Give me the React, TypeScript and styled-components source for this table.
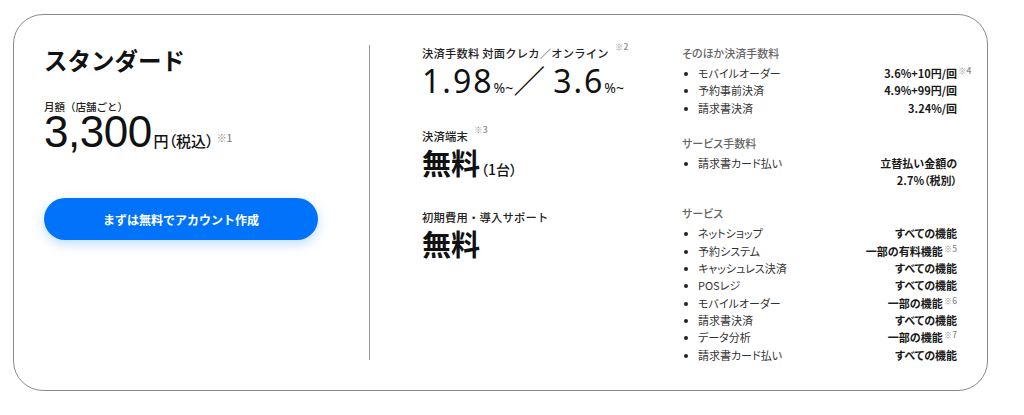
import React from "react";
import styled, { createGlobalStyle } from "styled-components";

const GlobalStyle = createGlobalStyle`
  html, body { margin: 0; padding: 0; background: #fff; }
  body {
    font-family: "Noto Sans CJK JP", "Noto Sans", sans-serif;
    color: #1a1a1a;
    -webkit-font-smoothing: antialiased;
  }
`;

const Page = styled.div`
  padding: 14px 0 0 13px;
`;

const Card = styled.section`
  box-sizing: border-box;
  width: 975px;
  height: 377px;
  border: 1px solid #8a8a8a;
  border-radius: 30px;
  padding: 30px;
  display: flex;
  align-items: stretch;
`;

const LeftCol = styled.div`
  width: 325px;
  flex: none;
  display: flex;
  flex-direction: column;
  align-items: flex-start;
`;

const Title = styled.h2`
  margin: 4px 0 0;
  font-size: 23.5px;
  line-height: 23px;
  font-weight: 700;
  color: #111;
`;

const SmallLabel = styled.div`
  margin-top: 28px;
  font-size: 10.5px;
  line-height: 14px;
  font-weight: 500;
  color: #222;
`;

const PriceRow = styled.div`
  display: flex;
  align-items: baseline;
  height: 36px;
  line-height: 36px;
  color: #111;
  font-feature-settings: "palt";
`;

const PriceNum = styled.span`
  font-family: "Liberation Sans", Arial, sans-serif;
  font-size: 44px;
  letter-spacing: -0.5px;
`;

const PriceUnit = styled.span`
  font-size: 15px;
  font-weight: 500;
  margin-left: 2px;
`;

const Note = styled.span<{ $top?: number; $size?: number; $ml?: number }>`
  font-size: ${(p) => p.$size ?? 8.5}px;
  color: #888;
  font-weight: 500;
  align-self: flex-start;
  line-height: 1;
  position: relative;
  top: ${(p) => p.$top ?? 0}px;
  margin-left: ${(p) => p.$ml ?? 2}px;
`;

const CtaButton = styled.button`
  margin-top: 48px;
  width: 274px;
  height: 42px;
  border: none;
  border-radius: 21px;
  background: #0073fa;
  color: #fff;
  font-family: "Noto Sans CJK JP", sans-serif;
  font-size: 12px;
  font-weight: 700;
  box-shadow: 0 4px 12px rgba(0, 115, 250, 0.25);
  cursor: pointer;
`;

const Divider = styled.div`
  width: 1px;
  flex: none;
  background: #9a9a9a;
`;

const MidCol = styled.div`
  width: 260px;
  flex: none;
  margin-left: 52px;
  display: flex;
  flex-direction: column;
  align-items: flex-start;
`;

const MidLabel = styled.div<{ $mt: number }>`
  margin-top: ${(p) => p.$mt}px;
  display: flex;
  align-items: center;
  height: 16px;
  font-size: 11.3px;
  line-height: 16px;
  font-weight: 500;
  color: #222;
  white-space: nowrap;
  letter-spacing: 0.2px;
`;

const RateRow = styled.div`
  display: flex;
  align-items: baseline;
  height: 40px;
  line-height: 40px;
  margin-top: -2px;
  color: #111;
`;

const RateNum = styled.span`
  font-family: "Noto Sans", sans-serif;
  font-size: 32px;
  font-weight: 400;
  letter-spacing: 2px;
`;

const RateUnit = styled.span`
  font-family: "Noto Sans", sans-serif;
  font-size: 14px;
  letter-spacing: 0;
`;

const RateSlash = styled.span`
  font-size: 32px;
  font-weight: 400;
  margin: 0 8px 0 0;
`;

const FreeRow = styled.div<{ $mt: number }>`
  margin-top: ${(p) => p.$mt}px;
  display: flex;
  align-items: baseline;
  height: 36px;
  line-height: 36px;
  color: #111;
  font-feature-settings: "palt";
`;

const FreeText = styled.span`
  font-size: 29px;
  font-weight: 700;
`;

const FreeSub = styled.span`
  font-size: 14px;
  font-weight: 500;
  margin-left: 1px;
`;

const RightCol = styled.div`
  flex: 1;
  display: flex;
  flex-direction: column;
  font-feature-settings: "palt";
`;

const Group = styled.div<{ $mt?: number }>`
  margin-top: ${(p) => p.$mt ?? 0}px;
`;

const GroupHead = styled.div`
  font-size: 11px;
  line-height: 17px;
  font-weight: 500;
  color: #666;
  margin-bottom: 3px;
`;

const Row = styled.div`
  display: flex;
  justify-content: space-between;
  align-items: flex-start;
  font-size: 11px;
  line-height: 17.3px;
`;

const RowLabel = styled.span`
  position: relative;
  padding-left: 16px;
  color: #333;
  &::before {
    content: "";
    position: absolute;
    left: 2px;
    top: 7px;
    width: 4px;
    height: 4px;
    border-radius: 50%;
    background: #222;
  }
`;

const RowValue = styled.span`
  position: relative;
  text-align: right;
  font-weight: 700;
  color: #1a1a1a;
`;

const HangNote = styled.span`
  position: absolute;
  left: 100%;
  top: -3px;
  font-size: 8.5px;
  color: #888;
  font-weight: 500;
  margin-left: 1px;
`;

const InlineNote = styled.span`
  font-size: 8.5px;
  color: #888;
  font-weight: 500;
  vertical-align: top;
  position: relative;
  top: -3px;
  margin-left: 1px;
`;

type Item = { label: string; value: React.ReactNode };

const otherFees: Item[] = [
  { label: "モバイルオーダー", value: <>3.6%+10円/回<HangNote>※4</HangNote></> },
  { label: "予約事前決済", value: "4.9%+99円/回" },
  { label: "請求書決済", value: "3.24%/回" },
];

const serviceFees: Item[] = [
  { label: "請求書カード払い", value: <>立替払い金額の<br />2.7%（税別）</> },
];

const services: Item[] = [
  { label: "ネットショップ", value: "すべての機能" },
  { label: "予約システム", value: <>一部の有料機能<InlineNote>※5</InlineNote></> },
  { label: "キャッシュレス決済", value: "すべての機能" },
  { label: "POSレジ", value: "すべての機能" },
  { label: "モバイルオーダー", value: <>一部の機能<InlineNote>※6</InlineNote></> },
  { label: "請求書決済", value: "すべての機能" },
  { label: "データ分析", value: <>一部の機能<InlineNote>※7</InlineNote></> },
  { label: "請求書カード払い", value: "すべての機能" },
];

const List = ({ items }: { items: Item[] }) => (
  <>
    {items.map((it, i) => (
      <Row key={i}>
        <RowLabel>{it.label}</RowLabel>
        <RowValue>{it.value}</RowValue>
      </Row>
    ))}
  </>
);

export default function App() {
  return (
    <>
      <GlobalStyle />
      <Page>
        <Card>
          <LeftCol>
            <Title>スタンダード</Title>
            <SmallLabel>月額（店舗ごと）</SmallLabel>
            <PriceRow>
              <PriceNum>3,300</PriceNum>
              <PriceUnit>円（税込）</PriceUnit>
              <Note $top={19} $size={10} $ml={3}>※1</Note>
            </PriceRow>
            <CtaButton>まずは無料でアカウント作成</CtaButton>
          </LeftCol>
          <Divider />
          <MidCol>
            <MidLabel $mt={0}>
              決済手数料 対面クレカ／オンライン
              <Note $top={-3} $ml={6}>※2</Note>
            </MidLabel>
            <RateRow>
              <RateNum>1.98</RateNum>
              <RateUnit>%~</RateUnit>
              <RateSlash>／</RateSlash>
              <RateNum>3.6</RateNum>
              <RateUnit>%~</RateUnit>
            </RateRow>
            <MidLabel $mt={29}>
              決済端末
              <Note $top={-3} $ml={6}>※3</Note>
            </MidLabel>
            <FreeRow $mt={0}>
              <FreeText>無料</FreeText>
              <FreeSub>（1台）</FreeSub>
            </FreeRow>
            <MidLabel $mt={29}>初期費用・導入サポート</MidLabel>
            <FreeRow $mt={0}>
              <FreeText>無料</FreeText>
            </FreeRow>
          </MidCol>
          <RightCol>
            <Group>
              <GroupHead>そのほか決済手数料</GroupHead>
              <List items={otherFees} />
            </Group>
            <Group $mt={18}>
              <GroupHead>サービス手数料</GroupHead>
              <List items={serviceFees} />
            </Group>
            <Group $mt={16}>
              <GroupHead>サービス</GroupHead>
              <List items={services} />
            </Group>
          </RightCol>
        </Card>
      </Page>
    </>
  );
}
